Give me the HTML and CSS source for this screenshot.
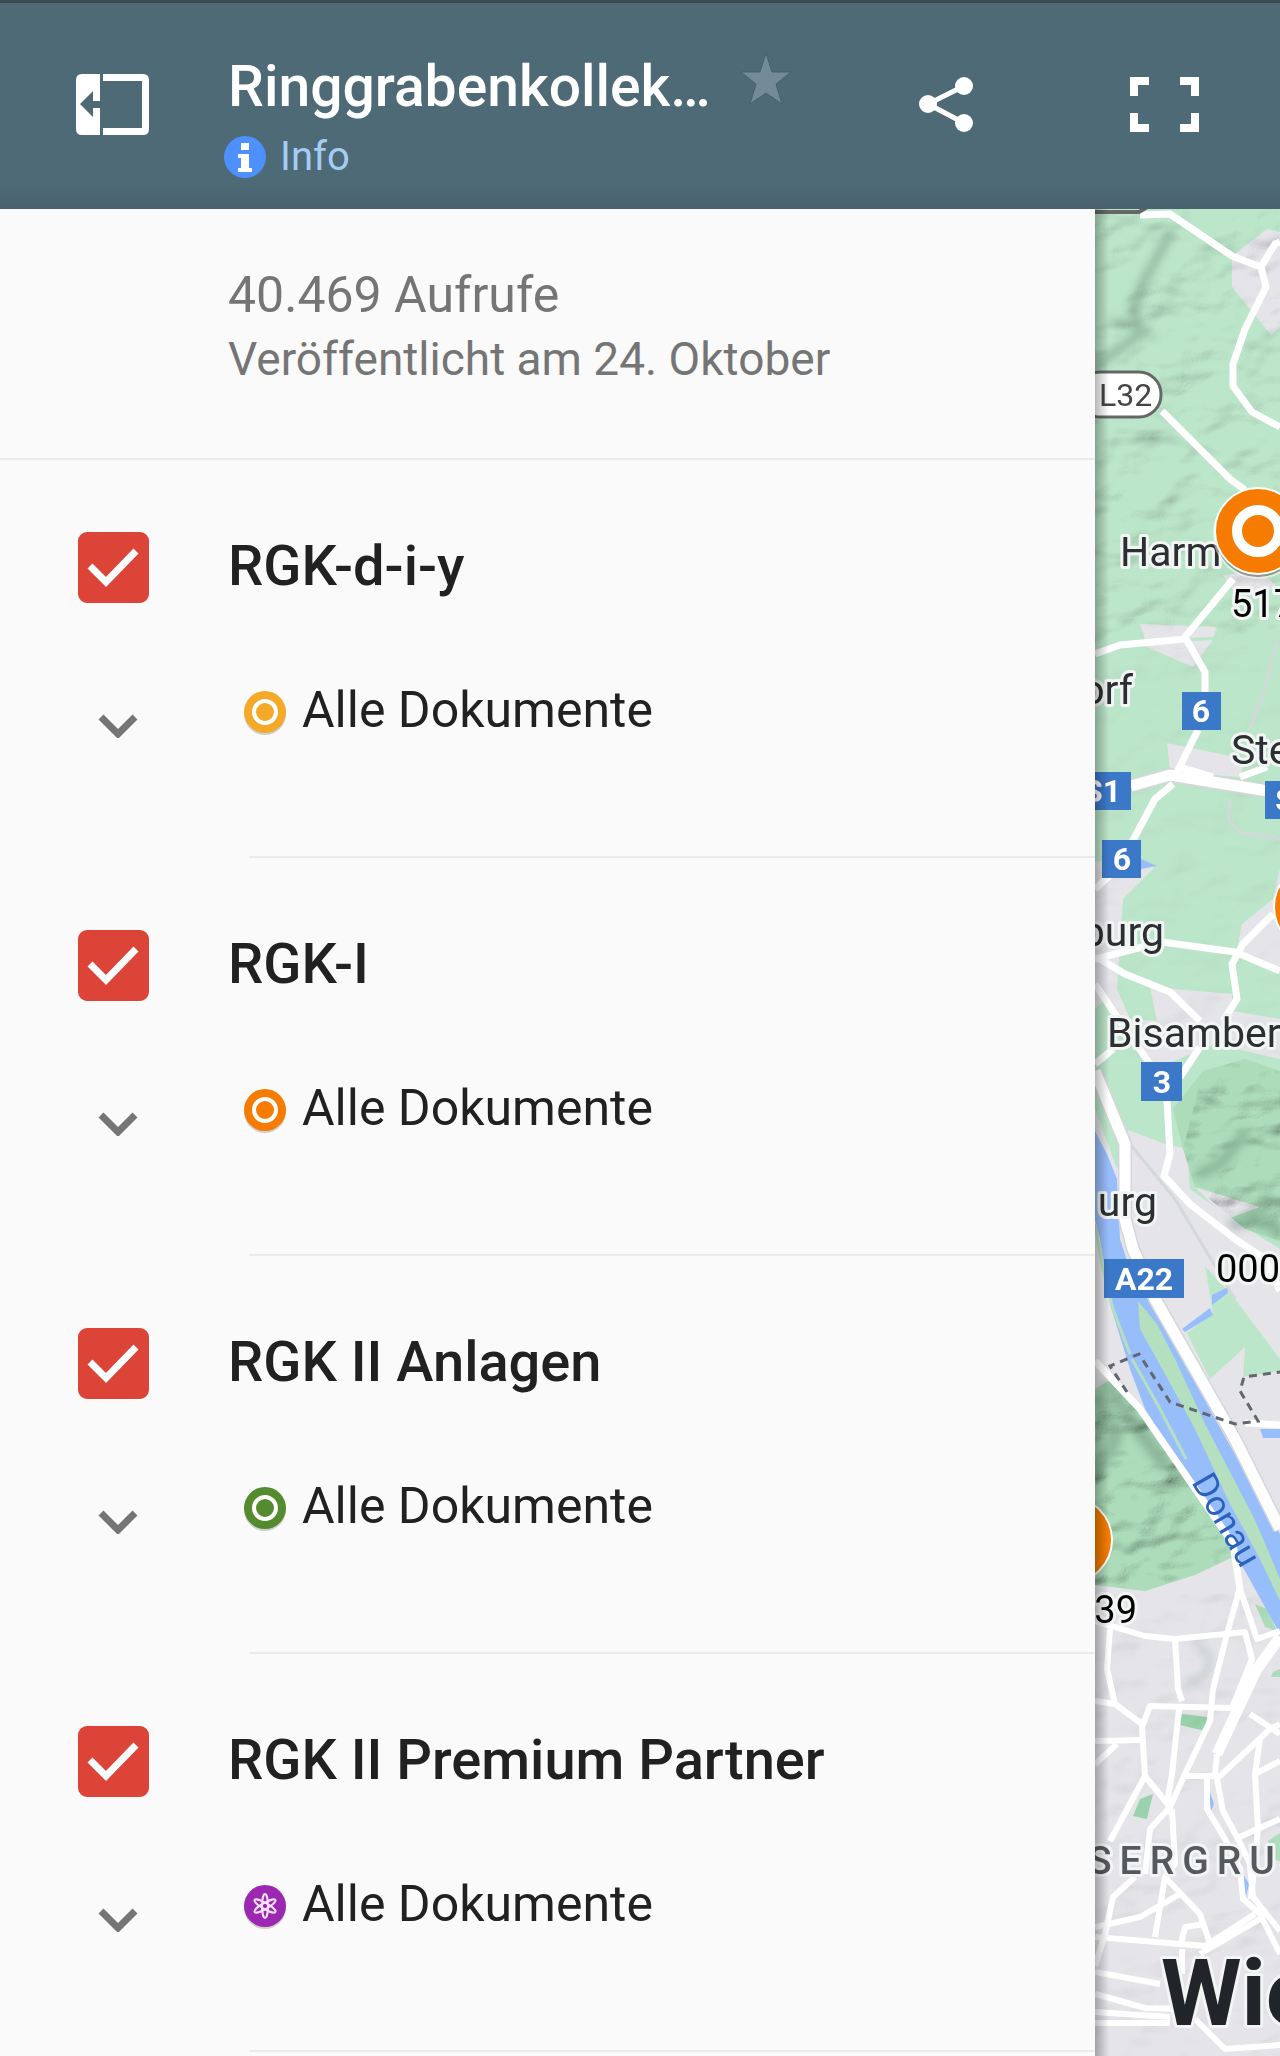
FILE: index.html
```html
<!DOCTYPE html>
<html lang="de">
<head>
  <meta charset="UTF-8" />
  <meta name="viewport" content="width=device-width, initial-scale=1.0"/>
  <title>Ringgrabenkollektoren</title>
  <link rel="stylesheet" href="styles.css">
</head>
<body>
  <header class="topbar">
    <button class="icon-btn" aria-label="Seitenleiste einklappen">
      <svg width="73" height="61" viewBox="0 0 73 61">
        <path fill="#fff" d="M6 0H24V27H17V17L4 30L17 43V34H24V61H6Q0 61 0 55V6Q0 0 6 0Z"/>
        <path fill="#fff" d="M27 0H67Q73 0 73 6V55Q73 61 67 61H27V54H66V7H27Z"/>
      </svg>
    </button>
    <div class="heading">
      <h1>Ringgrabenkollek…</h1>
      <a class="info" href="#info">
        <svg width="42" height="42" viewBox="0 0 42 42">
          <circle cx="21" cy="21" r="21" fill="#4d90fe"/>
          <path fill="#fff" d="M17 7H25V14H17ZM14 18H25V32H28V36H14V32H17V22H14Z"/>
        </svg>
        <span>Info</span>
      </a>
    </div>
    <button class="icon-btn star" aria-label="Markieren">
      <svg width="52" height="54" viewBox="0 0 52 54">
        <path fill="#738b99" stroke="#456070" stroke-width="1" d="M26 1L32 20H51L36 32L42 52L26 41L10 52L16 32L1 20H20Z"/>
      </svg>
    </button>
    <button class="icon-btn share" aria-label="Teilen">
      <svg width="55" height="55" viewBox="0 0 55 55">
        <path d="M45 9L9 27L45 46" fill="none" stroke="#fff" stroke-width="5"/>
        <g fill="#fff"><circle cx="45" cy="9" r="9"/><circle cx="9" cy="27" r="9"/><circle cx="45" cy="46" r="9"/></g>
      </svg>
    </button>
    <button class="icon-btn fullscreen" aria-label="Vollbild">
      <svg width="69" height="55" viewBox="0 0 69 55">
        <path fill="#fff" d="M0 0H19V8H8V19H0ZM50 0H69V19H61V8H50ZM0 36H8V47H19V55H0ZM61 36H69V55H50V47H61Z"/>
      </svg>
    </button>
  </header>

  <div class="content">
    <main class="panel">
      <div class="stats">
        <p class="views">40.469 Aufrufe</p>
        <p class="published">Veröffentlicht am 24. Oktober</p>
      </div>

      <section class="layer">
        <span class="check">
          <input type="checkbox" id="layer1" checked>
          <svg width="71" height="71" viewBox="0 0 71 71"><path d="M12 34L28 50L58 19"/></svg>
        </span>
        <label for="layer1">RGK-d-i-y</label>
        <button class="expand" aria-label="RGK-d-i-y aufklappen">
          <svg width="40" height="24" viewBox="0 0 40 24"><path d="M3 3L20 20L37 3"/></svg>
        </button>
        <div class="item">
          <svg width="42" height="50" viewBox="0 0 42 50">
            <circle class="pin-shadow" cx="21" cy="29" r="21"/>
            <circle cx="21" cy="27" r="21" fill="#f5a929"/>
            <circle class="pin-ring" cx="21" cy="27" r="11"/>
          </svg>
          <span>Alle Dokumente</span>
        </div>
      </section>
      <hr class="divider">

      <section class="layer">
        <span class="check">
          <input type="checkbox" id="layer2" checked>
          <svg width="71" height="71" viewBox="0 0 71 71"><path d="M12 34L28 50L58 19"/></svg>
        </span>
        <label for="layer2">RGK-I</label>
        <button class="expand" aria-label="RGK-I aufklappen">
          <svg width="40" height="24" viewBox="0 0 40 24"><path d="M3 3L20 20L37 3"/></svg>
        </button>
        <div class="item">
          <svg width="42" height="50" viewBox="0 0 42 50">
            <circle class="pin-shadow" cx="21" cy="29" r="21"/>
            <circle cx="21" cy="27" r="21" fill="#f57c00"/>
            <circle class="pin-ring" cx="21" cy="27" r="11"/>
          </svg>
          <span>Alle Dokumente</span>
        </div>
      </section>
      <hr class="divider">

      <section class="layer">
        <span class="check">
          <input type="checkbox" id="layer3" checked>
          <svg width="71" height="71" viewBox="0 0 71 71"><path d="M12 34L28 50L58 19"/></svg>
        </span>
        <label for="layer3">RGK II Anlagen</label>
        <button class="expand" aria-label="RGK II Anlagen aufklappen">
          <svg width="40" height="24" viewBox="0 0 40 24"><path d="M3 3L20 20L37 3"/></svg>
        </button>
        <div class="item">
          <svg width="42" height="50" viewBox="0 0 42 50">
            <circle class="pin-shadow" cx="21" cy="29" r="21"/>
            <circle cx="21" cy="27" r="21" fill="#558b2f"/>
            <circle class="pin-ring" cx="21" cy="27" r="11"/>
          </svg>
          <span>Alle Dokumente</span>
        </div>
      </section>
      <hr class="divider">

      <section class="layer">
        <span class="check">
          <input type="checkbox" id="layer4" checked>
          <svg width="71" height="71" viewBox="0 0 71 71"><path d="M12 34L28 50L58 19"/></svg>
        </span>
        <label for="layer4">RGK II Premium Partner</label>
        <button class="expand" aria-label="RGK II Premium Partner aufklappen">
          <svg width="40" height="24" viewBox="0 0 40 24"><path d="M3 3L20 20L37 3"/></svg>
        </button>
        <div class="item">
          <svg width="42" height="50" viewBox="0 0 42 50">
            <circle class="pin-shadow" cx="21" cy="29" r="21"/>
            <circle cx="21" cy="27" r="21" fill="#9c27b0"/>
            <g fill="none" stroke="#f6e3f9" stroke-width="2">
              <ellipse cx="21" cy="27" rx="3" ry="12"/>
              <ellipse cx="21" cy="27" rx="3" ry="12" transform="rotate(60 21 27)"/>
              <ellipse cx="21" cy="27" rx="3" ry="12" transform="rotate(120 21 27)"/>
            </g>
          </svg>
          <span>Alle Dokumente</span>
        </div>
      </section>
      <hr class="divider">
    </main>

    <div class="map">
      <svg width="185" height="1847" viewBox="0 0 185 1847">
        <defs>
          <filter id="relief" x="0" y="0" width="100%" height="100%">
            <feTurbulence type="fractalNoise" baseFrequency="0.014 0.022" numOctaves="3" seed="7"/>
            <feColorMatrix values="0 0 0 0 0  0 0 0 0 0  0 0 0 0 0  1 0 0 0 0"/>
            <feDiffuseLighting surfaceScale="16" diffuseConstant="1.4" lighting-color="#fff">
              <feDistantLight azimuth="225" elevation="45"/>
            </feDiffuseLighting>
            <feComposite in2="SourceGraphic" operator="in"/>
          </filter>
          <linearGradient id="edge"><stop offset="0" stop-opacity=".28"/><stop offset="1" stop-opacity="0"/></linearGradient>
        </defs>
        <rect width="185" height="1847" fill="#e4e4e9"/>

        <!-- fields and woods -->
        <g fill="#bce6ca">
          <path d="M0 0H185V660L178 690L147 715L142 740L185 762V810L137 802V785L55 778L62 812L35 810L22 780L28 690L60 658L0 652Z"/>
          <path d="M0 800L10 790L30 830L60 860L120 835L185 850V1040L140 1012L95 980L92 940L68 934L33 921L22 960L0 900Z"/>
          <path d="M110 1057L140 1090L185 1150V1162L148 1168L150 1138L115 1170L92 1124L118 1104Z"/>
        </g>
        <g fill="#acdcba">
          <path d="M0 1180L20 1168L60 1215L95 1270L135 1335L138 1348L100 1366L50 1382L0 1376Z"/>
          <path d="M108 862L150 850L185 862V1032L150 1020L100 978L88 940L78 900Z"/>
          <path d="M160 1395L172 1400L182 1422L170 1418ZM178 1463L185 1460V1468H176Z"/>
        </g>
        <g fill="#e4e4e9">
          <path d="M137 47L172 20L185 23V118L176 126L137 78Z"/>
          <path d="M128 366L165 362L185 380L140 384ZM45 415L122 418L118 428L50 430Z"/>
          <path d="M45 435L118 431L98 458Z"/>
          <path d="M72 534L150 550L145 568L75 562Z"/>
          <path d="M100 978L165 998L132 1010Z"/>
        </g>
        <g fill="#9ad3ab">
          <path d="M87 1505L112 1508L110 1522L85 1516ZM45 1590L58 1585L52 1610L38 1607Z"/>
        </g>
        <path fill="#aedfbd" d="M173 1632L185 1624V1652L175 1650Z"/>

        <!-- terrain shading -->
        <g class="relief" filter="url(#relief)">
          <path opacity=".22" d="M0 0H185V440H0Z"/>
          <path opacity=".5" d="M108 862L150 850L185 862V1032L150 1020L100 978L88 940Z"/>
          <path opacity=".5" d="M0 1180L20 1168L60 1215L95 1270L135 1335L138 1348L100 1366L50 1382L0 1376Z"/>
          <path opacity=".05" d="M0 440H185V850H0Z"/>
          <path opacity=".08" d="M0 1385H185V1847H0Z"/>
        </g>
        <g class="ridges">
          <path d="M75 25L50 70L38 100L45 125L10 150L0 160" stroke-width="9"/>
          <path d="M15 110L40 120L60 128" stroke-width="4"/>
          <path d="M150 925L125 955L105 965" stroke-width="10"/>
          <path d="M140 1015L160 1008L185 1022" stroke-width="12"/>
          <path d="M12 1175L35 1210L70 1255" stroke-width="14"/>
          <path d="M5 1190L20 1230L0 1265" stroke-width="14"/>
          <path d="M100 1432L115 1448L112 1465L90 1478" stroke-width="3"/>
        </g>

        <!-- Donau -->
        <g fill="#98bdfb">
          <path d="M0 922L12 945L22 970L25 1030L38 1070L60 1092L120 1210L178 1312L185 1325V1425L150 1362L90 1265L50 1200L35 1160L15 1095L5 1030L0 1010Z"/>
          <path d="M87 1120L115 1099L118 1106L90 1123ZM117 1086L133 1078V1084L117 1096ZM165 1220H185V1229H168ZM46 650L62 657L46 660Z"/>
          <path d="M114 1580L119 1595L116 1602ZM148 1665L154 1675L150 1692Z"/>
        </g>
        <path fill="#b5e0bf" d="M43 1092L62 1115L80 1150L110 1215L160 1311L185 1370V1392L165 1350L135 1295L100 1220L70 1165L45 1120Z"/>
        <path class="bank" d="M37 1150L65 1200L91 1250M0 1015L8 1060L18 1100L35 1145"/>

        <!-- roads -->
        <g class="paths">
          <path d="M182 430L170 480L155 520M135 590L134 612L145 623L185 630M35 935L80 990L140 1090"/>
        </g>
        <g class="casing">
          <path d="M36 577L75 566L170 582M0 862L30 935V1010L38 1040L60 1090L140 1230L185 1320"/>
        </g>
        <g class="roads wide">
          <path d="M36 577L75 566L185 584"/>
          <path d="M0 862L30 935V1010L38 1040L60 1090L140 1230L185 1320"/>
          <path d="M185 1428L162 1460L143 1500L122 1545"/>
        </g>
        <g class="roads">
          <path d="M45 6L75 5L137 47L166 58L171 78L150 120L138 155V177L157 203L185 218M166 58L180 35L185 33"/>
          <path d="M67 202L135 270L150 281M138 370L90 428L110 463V483M103 521L82 563M0 445L25 436L90 430"/>
          <path d="M78 575L60 590L36 635M85 558L118 568M145 568L172 558M0 680L20 662"/>
          <path d="M0 750L67 733L140 743L185 762M178 705L148 735L137 755L142 790L128 812M5 750L30 765L75 783L105 812"/>
          <path d="M0 775L22 808L55 855M105 838L85 868M0 855L18 840M72 892L75 945L69 967L95 995L140 1030L170 1050L185 1082"/>
          <path d="M0 1152L45 1200L90 1265L138 1335L145 1380M150 1214L185 1216"/>
        </g>
        <g class="roads streets">
          <path d="M145 1378L132 1425L118 1480L115 1512L90 1565L72 1605M145 1380L162 1430L185 1422"/>
          <path d="M0 1412L50 1427L80 1430L150 1423L157 1450L137 1499L55 1497L47 1518L50 1567L75 1598L55 1620L50 1665"/>
          <path d="M15 1420L12 1460L20 1495L47 1515M80 1430L83 1480L87 1492M0 1492L20 1495M84 1500L77 1565L72 1595"/>
          <path d="M0 1532L48 1531M22 1535L0 1555M50 1567L15 1632M90 1567H125L175 1520L185 1515M155 1505L185 1525"/>
          <path d="M112 1567V1600L130 1630L145 1660L148 1690L165 1705L185 1745M122 1570L128 1602L142 1628L155 1655L158 1688L185 1722"/>
          <path d="M165 1530L160 1565L163 1620L156 1690M140 1630L185 1610M160 1565L185 1552M122 1545L120 1565"/>
          <path d="M77 1600L80 1655L70 1668L60 1728M70 1668L105 1705L115 1735M40 1668L18 1688L10 1725L0 1757"/>
          <path d="M0 1718L45 1708L85 1685M0 1728L110 1737L160 1705M85 1738L90 1718L110 1715M105 1745L165 1710M87 1740V1765"/>
          <path d="M0 1763L65 1775M0 1785L50 1799L85 1800M0 1803L75 1808M0 1814H75M100 1810L130 1840L185 1836"/>
        </g>
        <path class="rail" d="M32 1183L15 1157L44 1145L75 1193L140 1215L163 1212L145 1182L149 1168L185 1163"/>

        <!-- road shields -->
        <path d="M-10 3H44L54 -3" fill="none" stroke="#666" stroke-width="4"/>
        <rect x="-17" y="163" width="83" height="45" rx="22" fill="#fff" stroke="#666" stroke-width="3"/>
        <text x="4" y="197" class="route">L32</text>
        <g fill="#3c78c8">
          <path d="M87 483H126V521H87ZM0 563H36V601H0ZM170 572H185V610H170ZM7 631H46V669H7ZM46 853H87V892H46ZM9 1050H89V1089H9Z"/>
        </g>
        <g class="shield">
          <text x="106" y="513">6</text>
          <text x="7" y="593">S1</text>
          <text x="190" y="602">S</text>
          <text x="27" y="661">6</text>
          <text x="67" y="884">3</text>
          <text x="49" y="1081">A22</text>
        </g>

        <!-- places -->
        <g class="place">
          <text x="25" y="357">Harm</text>
          <text x="38" y="495" text-anchor="end">orf</text>
          <text x="136" y="555">Ste</text>
          <text x="69" y="737" text-anchor="end">burg</text>
          <text x="12" y="838">Bisamber</text>
          <text x="62" y="1007" text-anchor="end">urg</text>
        </g>
        <text class="river" transform="translate(96 1273) rotate(60)">Donau</text>
        <text class="district" x="-7" y="1665">SERGRUN</text>
        <text class="city" x="66" y="1816">Wie</text>

        <!-- markers -->
        <g class="marker">
          <circle cx="163" cy="325" r="44" fill="#555" opacity=".5"/>
          <circle cx="163" cy="322" r="43"/><circle class="hole" cx="163" cy="322" r="21"/>
          <circle cx="222" cy="698" r="43"/>
          <circle cx="-26" cy="1331" r="43"/>
        </g>
        <g class="count">
          <text x="136" y="408">517</text>
          <text x="121" y="1073">000</text>
          <text x="42" y="1414" text-anchor="end">39</text>
        </g>
        <rect width="14" height="1847" fill="url(#edge)"/>
      </svg>
    </div>
  </div>
</body>
</html>
```

FILE: styles.css
```css
* {
  box-sizing: border-box;
}
body {
  margin: 0;
  min-height: 100vh;
  display: flex;
  flex-direction: column;
  font-family: Roboto, "Liberation Sans", sans-serif;
  background: #fafafa;
  color: #212121;
}
h1, p {
  margin: 0;
  font-weight: 400;
}
button {
  padding: 0;
  border: none;
  background: none;
  cursor: pointer;
}
svg {
  display: block;
  flex-shrink: 0;
}

/* header */
.topbar {
  display: flex;
  align-items: center;
  height: 209px;
  padding: 0 81px 4px 76px;
  border-top: 3px solid #3d4a50;
  background: linear-gradient(#4e6a77 90%, #48616d);
}
.heading {
  margin-left: 79px;
  padding-top: 28px;
}
.heading h1 {
  font-size: 57px;
  line-height: 64px;
  font-weight: 500;
  color: #fff;
  white-space: nowrap;
}
.info {
  display: flex;
  align-items: center;
  gap: 14px;
  margin: 14px 0 0 -4px;
  font-size: 40px;
  line-height: 48px;
  color: #a3cdf3;
  text-decoration: none;
}
.star {
  align-self: flex-start;
  margin: 49px 0 0 29px;
}
.share {
  margin-left: auto;
}
.fullscreen {
  margin-left: 156px;
}

/* side panel */
.content {
  display: flex;
  flex: 1;
}
.panel {
  flex: 1;
  min-width: 0;
  background: #fafafa;
}
.stats {
  padding: 54px 0 67px 228px;
  border-bottom: 2px solid #ebebeb;
  color: #757575;
  line-height: 64px;
}
.views {
  font-size: 50px;
}
.published {
  font-size: 46px;
}
.layer {
  display: grid;
  grid-template-columns: 149px 1fr;
  column-gap: 79px;
  row-gap: 75px;
  padding-top: 72px;
}
.check {
  display: grid;
  justify-content: end;
}
.check input,
.check svg {
  grid-area: 1 / 1;
}
.check input {
  appearance: none;
  width: 71px;
  height: 71px;
  margin: 0;
  border-radius: 9px;
  background: #fff;
  border: 4px solid #db4437;
}
.check input:checked {
  background: #db4437;
}
.check svg {
  pointer-events: none;
}
.check path {
  fill: none;
  stroke: #fff;
  stroke-width: 7;
}
.layer label {
  font-size: 56px;
  line-height: 68px;
  font-weight: 500;
}
.expand {
  width: 40px;
  height: 96px;
  margin-left: 98px;
}
.expand path {
  fill: none;
  stroke: #757575;
  stroke-width: 7;
}
.item {
  display: flex;
  align-items: center;
  align-self: start;
  gap: 16px;
  padding-left: 16px;
  font-size: 50px;
  line-height: 64px;
}
.pin-shadow {
  fill: #cfcfcf;
}
.pin-ring {
  fill: none;
  stroke: #fff;
  stroke-width: 4;
}
.divider {
  height: 2px;
  margin: 82px 0 0 249px;
  border: none;
  background: #ebebeb;
}

/* map */
.map {
  flex: 0 0 185px;
  overflow: hidden;
  background: #e4e4e9;
}
.relief {
  mix-blend-mode: multiply;
}
.ridges {
  fill: none;
  stroke: #5d7f6b;
  stroke-linejoin: round;
  stroke-linecap: round;
  opacity: .4;
  filter: blur(4px);
}
.bank {
  fill: none;
  stroke: #b5e0bf;
  stroke-width: 3;
}
.paths {
  fill: none;
  stroke: #d3d8d8;
  stroke-width: 3;
}
.casing {
  fill: none;
  stroke: #d4d6da;
  stroke-width: 14;
}
.roads {
  fill: none;
  stroke: #fff;
  stroke-width: 7;
  stroke-linejoin: round;
}
.roads.wide {
  stroke-width: 11;
}
.roads.streets {
  stroke-width: 6;
}
.rail {
  fill: none;
  stroke: #62676d;
  stroke-width: 3;
  stroke-dasharray: 8 6;
}
.route {
  font-size: 32px;
  fill: #444;
}
.shield {
  font-size: 32px;
  font-weight: 700;
  fill: #fff;
  text-anchor: middle;
}
.place,
.count,
.river,
.district,
.city {
  paint-order: stroke;
  stroke: #f2f5f4;
  stroke-width: 6px;
  stroke-linejoin: round;
}
.place {
  font-size: 41px;
  fill: #2c2f32;
}
.count {
  font-size: 38px;
  fill: #000;
}
.river {
  font-size: 35px;
  fill: #2b62bd;
  stroke: none;
}
.district {
  font-size: 39px;
  font-weight: 500;
  letter-spacing: 8px;
  fill: #55585c;
}
.city {
  font-size: 92px;
  font-weight: 700;
  fill: #212429;
}
.marker {
  fill: #f57c00;
  stroke: #fff;
  stroke-width: 2px;
}
.marker .hole {
  stroke-width: 10px;
}
```
